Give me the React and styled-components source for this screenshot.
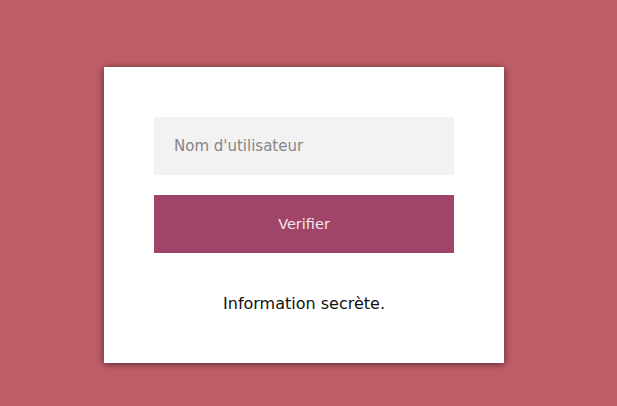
import styled, { createGlobalStyle } from 'styled-components';

const GlobalStyle = createGlobalStyle`
  html, body {
    margin: 0;
    padding: 0;
    background: #bd5d68;
    font-family: "DejaVu Sans", "Noto Sans", sans-serif;
  }
  * { box-sizing: border-box; }
`;

const Page = styled.div`
  min-height: 406px;
  padding: 67px 0 0 104px;
`;

const Card = styled.form`
  width: 400px;
  height: 296px;
  background: #fff;
  padding: 50px;
  display: flex;
  flex-direction: column;
  box-shadow: 0 1px 7px rgba(0, 0, 0, 0.55);
`;

const Input = styled.input`
  width: 300px;
  height: 58px;
  border: none;
  outline: none;
  background: #f2f2f2;
  padding: 0 20px;
  font-family: inherit;
  font-size: 15px;
  color: #333;
  &::placeholder {
    color: #858585;
  }
`;

const Button = styled.button`
  margin-top: 20px;
  width: 300px;
  height: 58px;
  border: none;
  background: #a04469;
  color: #f3e6ec;
  font-family: inherit;
  font-size: 14.5px;
  cursor: pointer;
`;

const Secret = styled.p`
  margin: 41px 0 0;
  text-align: center;
  font-size: 16px;
  color: #111;
`;

export default function App() {
  return (
    <>
      <GlobalStyle />
      <Page>
        <Card onSubmit={(e) => e.preventDefault()}>
          <Input type="text" placeholder="Nom d'utilisateur" />
          <Button type="submit">Verifier</Button>
          <Secret>Information secrète.</Secret>
        </Card>
      </Page>
    </>
  );
}
